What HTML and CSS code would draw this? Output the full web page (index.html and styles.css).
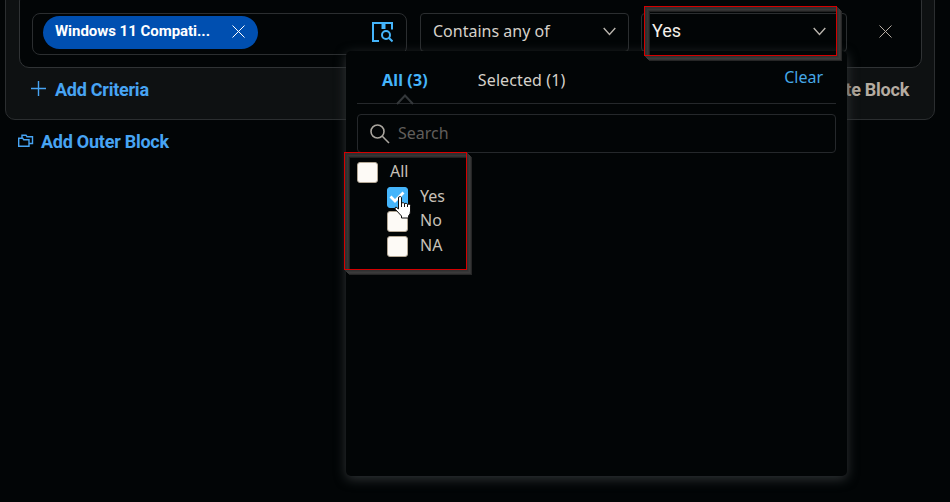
FILE: index.html
```html
<!DOCTYPE html>
<html lang="en">
<head>
<meta charset="utf-8">
<title>Criteria</title>
<link rel="stylesheet" href="styles.css">
</head>
<body>
<main class="outer-block">
  <section class="inner-block">
    <div class="field attribute">
      <div class="chip"><span>Windows 11 Compati...</span>
        <svg width="13" height="13" viewBox="0 0 13 13"><path d="M.5 .5l12 12M12.500 .5l-12 12"/></svg>
      </div>
      <svg class="browse" width="22" height="22" viewBox="0 0 22 22"><path d="M8 20H2V2H21V8.500M11.500 2v5h2V2"/><circle cx="15" cy="14" r="4"/><path d="M18 17l3.500 3.500"/></svg>
    </div>
    <div class="field operator"><span>Contains any of</span>
      <svg class="chevron" width="13" height="9" viewBox="0 0 13 9"><path d="M.7 1l5.800 6.500L12.300 1"/></svg>
    </div>
    <div class="field value"><span>Yes</span>
      <svg class="chevron" width="13" height="9" viewBox="0 0 13 9"><path d="M.7 1l5.800 6.500L12.300 1"/></svg>
    </div>
    <svg class="remove" width="13" height="13" viewBox="0 0 13 13"><path d="M.5 .5l12 12M12.500 .5l-12 12"/></svg>
  </section>
  <div class="block-actions">
    <span class="link"><svg width="16" height="16" viewBox="0 0 16 16"><path d="M7.500 0v15M0 7.500h15"/></svg>Add Criteria</span>
    <span class="delete">Delete Block</span>
  </div>
</main>
<div class="link outer-link"><svg width="16" height="14" viewBox="0 0 16 14"><path d="M4 4V1.200h4l1 1.500h5.500v6.800H11M.7 12.300V4.200h4l1 1.600H11v6.500z"/></svg>Add Outer Block</div>

<div class="panel">
  <div class="tabs">
    <span class="tab active">All (3)</span>
    <span class="tab second">Selected (1)</span>
    <span class="clear">Clear</span>
    <svg class="pointer" width="18" height="11" viewBox="0 0 18 11"><path d="M1 10l8-8.500 8 8.500"/></svg>
  </div>
  <div class="search">
    <svg width="20" height="20" viewBox="0 0 20 20"><circle cx="7.500" cy="7.500" r="6.500"/><path d="M12.300 12.300l6.700 6.700"/></svg>
    <span>Search</span>
  </div>
  <div class="options">
    <div class="option all"><i></i><span>All</span></div>
    <div class="option"><i class="checked"><svg width="20" height="20" viewBox="0 0 20 20"><path d="M3.500 9.500l4.500 4.500L16.500 5.500"/></svg></i><span>Yes</span></div>
    <div class="option"><i></i><span>No</span></div>
    <div class="option"><i></i><span>NA</span></div>
  </div>
</div>
<div class="frame frame-value"></div>
<div class="frame frame-options"></div>
<svg class="cursor" width="18" height="25" viewBox="0 0 18 25"><path d="M4.500 2.200Q6.500 .5 7.500 2.500V8q2-1 3 .5 2-.7 3 .7 2.500-.5 3 1.300V16q0 3-2 5v2H7.500v-2L1.500 14.500Q0 12.500 2 12l2.500 2z"/><path d="M7.500 8v4M10.500 8.500V12M13.500 9.200V12"/></svg>
</body>
</html>
```
FILE: styles.css
```css
* { box-sizing: border-box; }
body {
  margin: 0;
  height: 502px;
  overflow: hidden;
  position: relative;
  background: #020506;
  color: #d6d1ca;
  font: 16px "Noto Sans", sans-serif;
}
svg { display: block; flex: none; fill: none; stroke: currentColor; }

.outer-block {
  margin: -10px 15px 0 5px;
  height: 130px;
  padding: 0 12px 0 13px;
  background: #0e1112;
  border: 1px solid #2b2e30;
  border-radius: 10px;
}
.inner-block {
  height: 77px;
  padding: 21px 29px 0 12px;
  display: flex;
  align-items: flex-start;
  background: #020506;
  border: 1px solid #303335;
  border-radius: 10px;
}
.field {
  display: flex;
  align-items: center;
  justify-content: space-between;
  height: 39px;
  border: 1px solid #2b2e30;
  border-radius: 4px;
}
.attribute { width: 375px; height: 42px; padding: 0 13px 3px 10px; border-radius: 8px; }
.operator { width: 209px; margin-left: 13px; padding: 0 12px; }
.operator span { padding-bottom: 4px; }
.value { width: 206px; margin-left: 12px; padding: 0 20px 0 10px; color: #f4f0ea; font-family: Roboto, sans-serif; font-size: 18px; }
.value span { padding-bottom: 4px; }
.chevron { margin-bottom: 2px; }
.chip {
  display: flex;
  align-items: center;
  justify-content: space-between;
  width: 215px;
  height: 33px;
  padding: 0 13px 0 12px;
  border-radius: 17px;
  background: #004fb0;
  color: #fff;
  font: bold 15px Roboto, sans-serif;
}
.chip span { padding-bottom: 4px; letter-spacing: -.03px; }
.chip svg { margin-bottom: 2px; }
.browse { margin-top: -1px; color: #45b5fb; stroke-width: 2; }
.chevron { color: #b9b4ad; stroke-width: 1.4; }
.remove { margin: 12px 0 0 32px; color: #b5aca1; }

.block-actions {
  display: flex;
  justify-content: space-between;
  align-items: center;
  height: 43px;
  padding: 0 13px 0 12px;
  font: bold 18px Roboto, sans-serif;
  letter-spacing: -.25px;
}
.link { display: flex; align-items: center; color: #47a4f3; font: bold 18px Roboto, sans-serif; letter-spacing: -.25px; }
.link svg { stroke-width: 1.4; margin-right: 8px; }
.block-actions .link svg { margin-top: -2px; }
.delete { color: #b5aca1; }
.outer-link { margin: 11px 0 0 18px; }
.outer-link svg { margin: -2px 7px 0 0; }

.panel {
  position: absolute;
  left: 346px;
  top: 51px;
  width: 501px;
  height: 425px;
  padding: 0 11px;
  background: #020506;
  border-radius: 5px;
  box-shadow: 0 3px 12px #303436;
}
.tabs {
  position: relative;
  display: flex;
  height: 53px;
  padding: 18px 13px 0 25px;
  border-bottom: 1px solid #25282b;
}
.tab { margin-right: 50px; }
.active { color: #45b5fb; font-weight: bold; letter-spacing: .15px; }
.second { letter-spacing: .12px; }
.clear { margin: -3px 0 0 auto; color: #45a8e8; }
.pointer { position: absolute; left: 39px; bottom: -2px; color: #34383b; stroke-width: 2; }
.search {
  display: flex;
  align-items: center;
  height: 39px;
  margin-top: 10px;
  padding-left: 12px;
  border: 1px solid #25282b;
  border-radius: 4px;
  color: #605e5b;
}
.search svg { margin-right: 8px; color: #aaa69f; stroke-width: 1.6; }
.search span { padding-bottom: 2px; }
.options { padding: 7px 0 0; }
.option { display: flex; align-items: center; height: 24.7px; padding-left: 30px; color: #c8c1b8; }
.option i {
  width: 21px;
  height: 21px;
  margin-right: 12px;
  border: 1px solid #b3a795;
  border-radius: 3px;
  background: #fdfaf6;
}
.option span { padding-bottom: 3px; }
.option.all { padding-left: 0; }
.option .checked { background: #45b5fb; border-color: #45b5fb; color: #fff; }
.checked svg { stroke-width: 2.8; margin: -1px; }

.frame {
  position: absolute;
  border: 1px solid #d40000;
  box-shadow: 1px 1px #303030, 2px 2px #363636, 3px 3px #3b3b3b, 4px 4px #353535, 5px 5px #262626,
    inset 2px 2px #303030, inset 3px 3px #363636, inset 4px 4px #303030, inset 5px 5px #202020;
}
.frame-value { left: 644px; top: 6px; width: 193px; height: 50px; }
.frame-options { left: 344px; top: 152px; width: 123px; height: 118px; }
.cursor { position: absolute; left: 394px; top: 195px; fill: #fff; stroke: #111; }
```
